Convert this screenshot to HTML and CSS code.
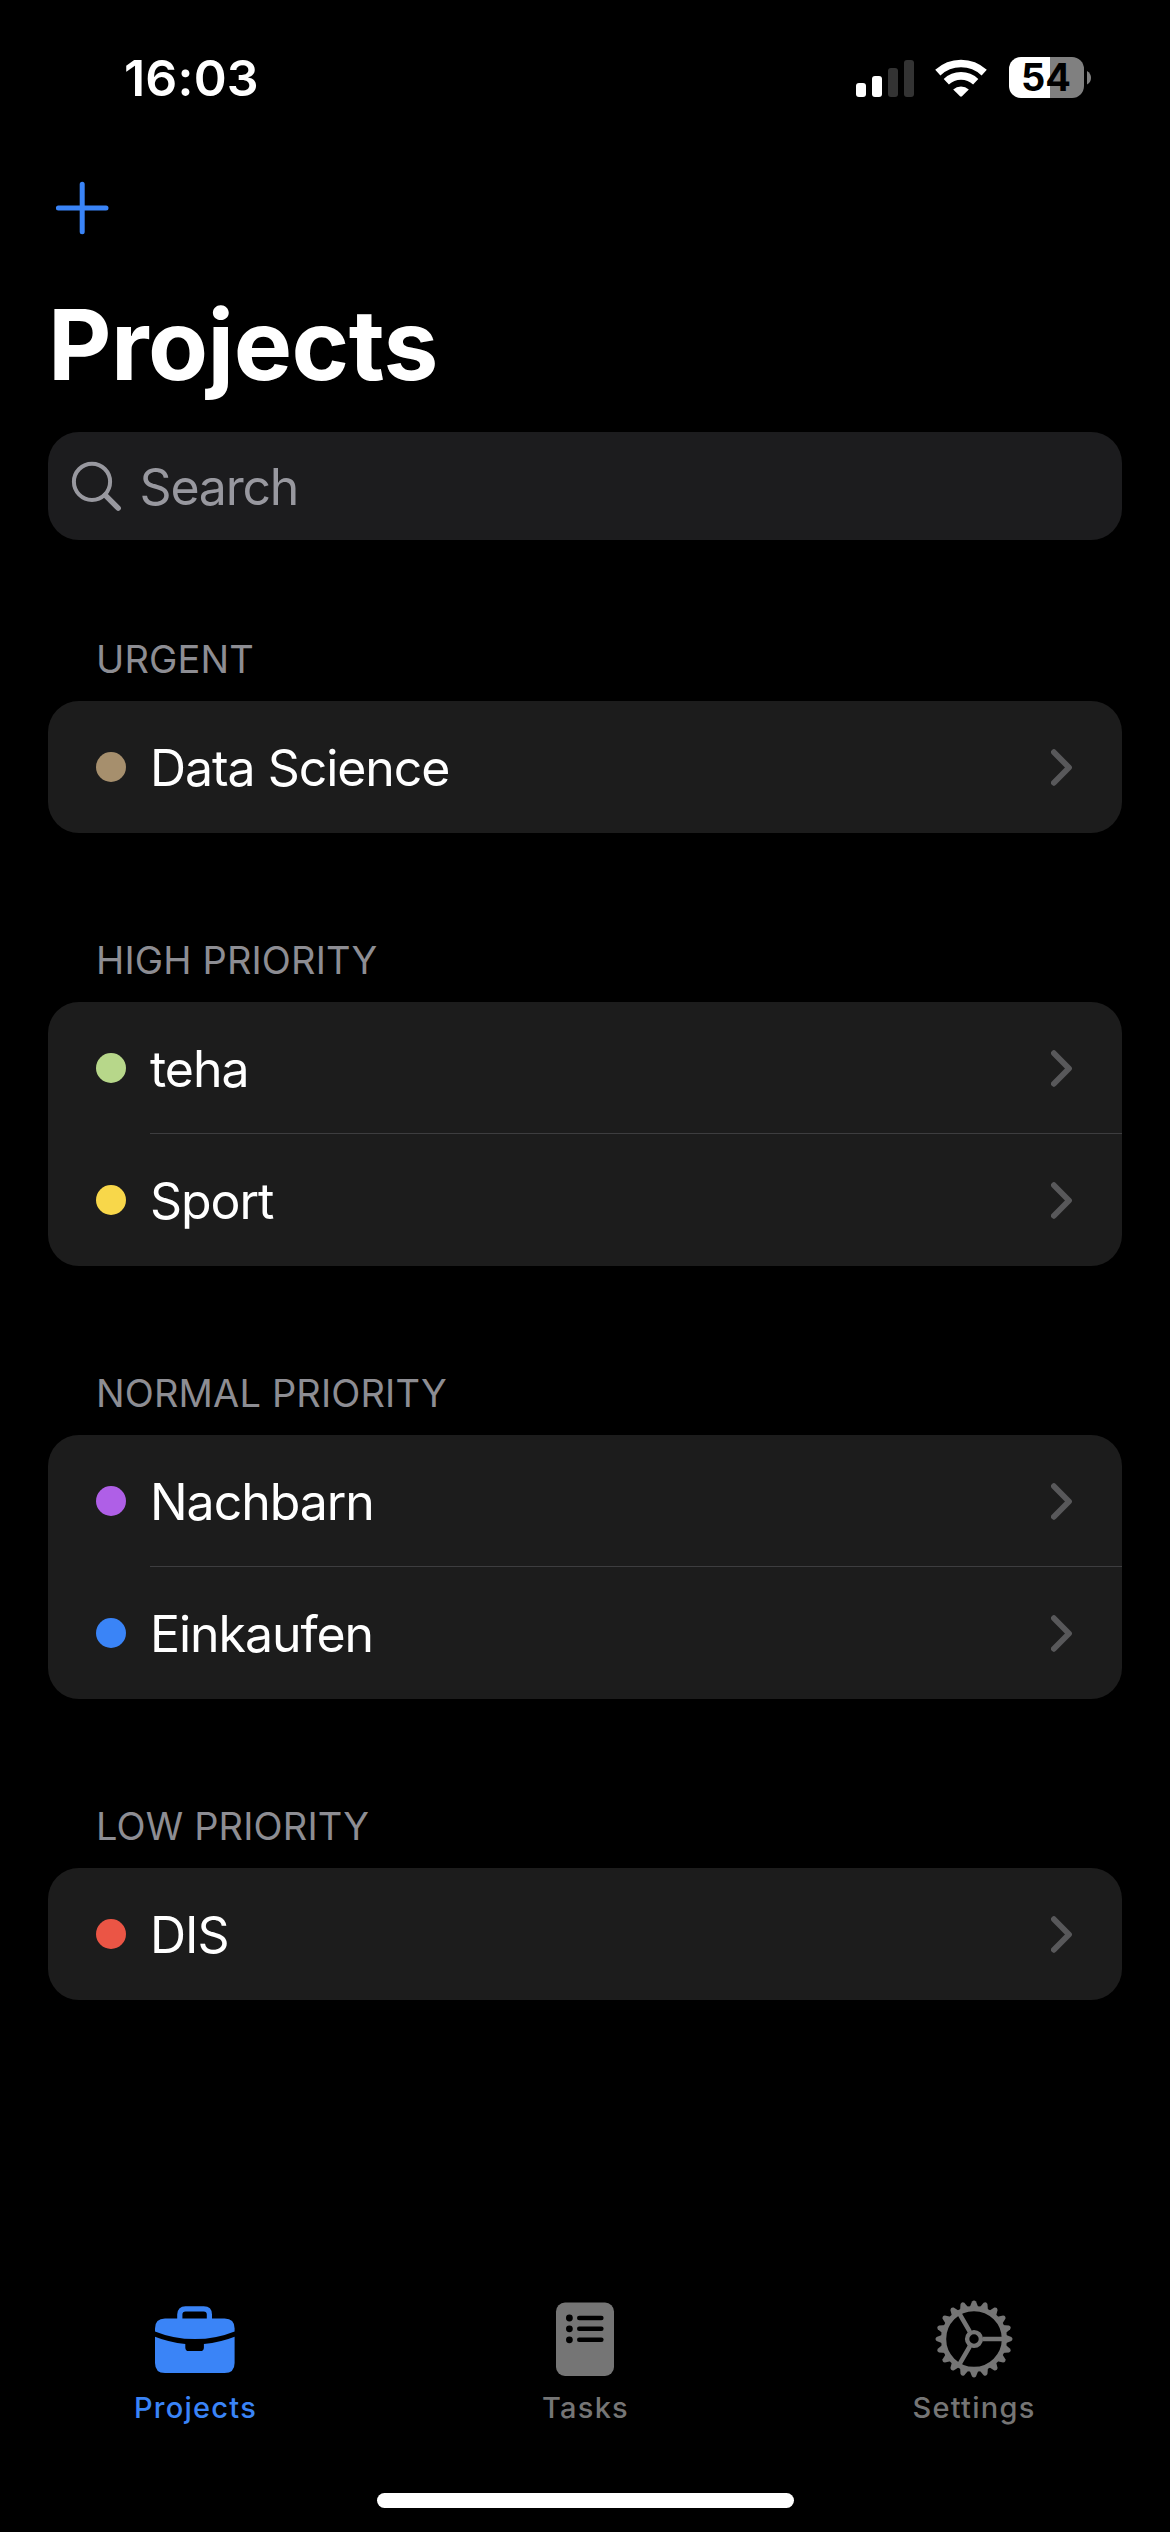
FILE: index.html
```html
<!DOCTYPE html>
<html lang="en">
<head>
<meta charset="utf-8">
<title>Projects</title>
<link rel="stylesheet" href="styles.css">
</head>
<body>
<svg class="defs" aria-hidden="true">
  <defs>
    <symbol id="chevron" viewBox="0 0 21 37"><path d="M2.9 3.2 18 18.5 2.9 33.8" fill="none" stroke="currentColor" stroke-width="5.8" stroke-linecap="round" stroke-linejoin="round"/></symbol>
    <path id="tooth" d="M-4.6-31 -2-37.4Q0-39.6 2-37.4L4.6-31Z"/>
  </defs>
</svg>
<div class="screen">
  <header class="status">
    <div class="time">16:03</div>
    <div class="indicators">
      <svg class="signal" width="58" height="38" viewBox="0 0 58 38">
        <g fill="#fff"><rect x="0" y="24" width="10" height="14" rx="3"/><rect x="16" y="17" width="10" height="21" rx="3"/></g>
        <g fill="#333"><rect x="32" y="9" width="10" height="29" rx="3"/><rect x="48" y="1" width="10" height="37" rx="3"/></g>
      </svg>
      <svg class="wifi" width="52" height="38" viewBox="0 0 52 38">
        <g fill="none" stroke="#fff" stroke-width="7.6">
          <path d="M2.8 13.6A34 34 0 0 1 49.2 13.6"/>
          <path d="M11.3 22.7A21.5 21.5 0 0 1 40.7 22.7"/>
        </g>
        <path d="M18.2 30.4A11.6 11.6 0 0 1 33.8 30.4L27 37.3Q26 38.2 25 37.3Z" fill="#fff"/>
      </svg>
      <div class="battery"><div class="cell">54</div><svg width="4" height="14" viewBox="0 0 4 14"><path d="M0 0Q4 2.4 4 6.8T0 13.6Z" fill="#808080"/></svg></div>
    </div>
  </header>

  <nav class="toolbar">
    <svg width="54" height="54" viewBox="0 0 54 54"><path d="M27.2 3.2V50.8M3.4 27H51" fill="none" stroke="currentColor" stroke-width="5" stroke-linecap="round"/></svg>
  </nav>

  <h1 class="title">Projects</h1>

  <div class="search">
    <svg width="52" height="52" viewBox="0 0 52 52" fill="none" stroke="currentColor"><circle cx="22" cy="21.8" r="18.1" stroke-width="4"/><path d="M35.2 35.2 48.2 48.2" stroke-width="5.4" stroke-linecap="round"/></svg>
    <span>Search</span>
  </div>

  <main class="sections">
    <section>
      <h2>URGENT</h2>
      <ul class="card">
        <li><i class="dot brown"></i><div class="row"><span>Data Science</span><svg class="chevron"><use href="#chevron"/></svg></div></li>
      </ul>
    </section>
    <section>
      <h2>HIGH PRIORITY</h2>
      <ul class="card">
        <li><i class="dot green"></i><div class="row"><span>teha</span><svg class="chevron"><use href="#chevron"/></svg></div></li>
        <li><i class="dot yellow"></i><div class="row"><span>Sport</span><svg class="chevron"><use href="#chevron"/></svg></div></li>
      </ul>
    </section>
    <section>
      <h2>NORMAL PRIORITY</h2>
      <ul class="card">
        <li><i class="dot purple"></i><div class="row"><span>Nachbarn</span><svg class="chevron"><use href="#chevron"/></svg></div></li>
        <li><i class="dot blue"></i><div class="row"><span>Einkaufen</span><svg class="chevron"><use href="#chevron"/></svg></div></li>
      </ul>
    </section>
    <section>
      <h2>LOW PRIORITY</h2>
      <ul class="card">
        <li><i class="dot red"></i><div class="row"><span>DIS</span><svg class="chevron"><use href="#chevron"/></svg></div></li>
      </ul>
    </section>
  </main>

  <footer class="bottom">
    <nav class="tabs">
      <a class="tab active">
        <svg width="80" height="80" viewBox="0 0 80 80">
          <path d="M24.8 22V15.5Q24.8 9.8 30.5 9.8H48.7Q54.4 9.8 54.4 15.5V22" fill="none" stroke="currentColor" stroke-width="5.2"/>
          <path d="M0 32.4V29.6Q0 19.6 10 19.6H69.6Q79.6 19.6 79.6 29.6V32.4Q61 40 39.8 40T0 32.4Z" fill="currentColor"/>
          <path d="M0 37.8Q14 43.4 30.3 45V48.4Q30.3 52 33.9 52H45.3Q48.9 52 48.9 48.4V45Q65.6 43.4 79.6 37.8V64Q79.6 74 69.6 74H10Q0 74 0 64Z" fill="currentColor"/>
        </svg>
        <span>Projects</span>
      </a>
      <a class="tab">
        <svg width="80" height="80" viewBox="0 0 80 80">
          <rect x="11" y="3.6" width="58" height="73.4" rx="9" fill="currentColor"/>
          <g fill="#000"><circle cx="24.4" cy="19" r="3.4"/><circle cx="24.4" cy="29.8" r="3.4"/><circle cx="24.4" cy="40.8" r="3.4"/>
          <rect x="32" y="16.8" width="26.6" height="4.4" rx="2.2"/><rect x="32" y="27.6" width="26.6" height="4.4" rx="2.2"/><rect x="32" y="38.6" width="26.6" height="4.4" rx="2.2"/></g>
        </svg>
        <span>Tasks</span>
      </a>
      <a class="tab settings">
        <svg width="80" height="80" viewBox="-40 -40 80 80">
          <g fill="none" stroke="currentColor">
            <circle r="30.4" stroke-width="5.2"/>
            <circle r="6.9" stroke-width="4.4"/>
            <path d="M8.5 0H29M-4.2 -7.4 -14.5 -25.1M-4.2 7.4 -14.5 25.1" stroke-width="4.6"/>
          </g>
          <g id="teeth" fill="currentColor"></g>
        </svg>
        <span>Settings</span>
      </a>
    </nav>
    <div class="home"></div>
  </footer>
</div>
<script src="gear.js"></script>
</body>
</html>
```
FILE: styles.css
```css
* { box-sizing: border-box; }
body { margin: 0; background: #000; }
h1, h2, ul { margin: 0; padding: 0; font-weight: 400; list-style: none; }
svg { display: block; flex: none; }
.defs { position: absolute; width: 0; height: 0; }

.screen {
  width: 1170px; height: 2532px;
  display: flex; flex-direction: column;
  background: #000; color: #fff;
  font-family: Inter, "Liberation Sans", sans-serif;
  overflow: hidden;
}

.status {
  height: 156px; padding: 0 79px 0 124px;
  display: flex; justify-content: space-between; align-items: flex-start;
}
.time { margin-top: 48px; line-height: 60px; font-size: 50px; font-weight: 600; letter-spacing: .2px; }
.indicators { display: flex; align-items: center; height: 41px; margin-top: 57px; }
.wifi { margin-left: 21px; }
.battery { display: flex; align-items: center; gap: 3px; margin-left: 22px; }
.cell {
  width: 75px; height: 41px; border-radius: 12px;
  padding-left: 12px;
  background: linear-gradient(90deg, #fff 41px, #808080 41px);
  color: #000; font-size: 38px; font-weight: 700; line-height: 41px;
}

.toolbar { height: 104px; padding: 25px 55px; color: #3a84f7; }
.title { height: 172px; padding-left: 48px; line-height: 169px; font-size: 98px; font-weight: 700; letter-spacing: -.5px; }

.search {
  height: 108px; margin: 0 48px; padding-left: 22px;
  display: flex; align-items: center; gap: 17.5px;
  border-radius: 31px; background: #1c1c1e; color: #98989f;
  font-size: 50px; letter-spacing: -1.2px;
}
.search span { padding-top: 1px; }

.sections { display: flex; flex-direction: column; gap: 104px; padding: 96px 48px 0; }
.sections h2 { padding-left: 48px; margin-bottom: 18px; line-height: 47px; font-size: 38px; letter-spacing: .15px; color: #8d8d93; }
.card { border-radius: 31px; background: #1c1c1c; }
.card li { height: 132px; padding-left: 48px; display: flex; align-items: center; gap: 24px; }
.dot { flex: none; width: 30px; height: 30px; border-radius: 50%; }
.brown { background: #a68f6d; }
.green { background: #b7d78a; }
.yellow { background: #f8d74a; }
.purple { background: #af5fe7; }
.blue { background: #3a84f7; }
.red { background: #eb5545; }
.row {
  flex: 1; height: 132px; padding-right: 50px;
  display: flex; align-items: center; justify-content: space-between;
  font-size: 50px; letter-spacing: -1.05px;
}
.row span { padding-top: 1px; }
li:not(:last-child) .row { box-shadow: inset 0 -1px #3d3d3f; }
.chevron { width: 21px; height: 37px; color: #58585a; }

.bottom { margin-top: auto; padding-bottom: 24px; }
.tabs { display: grid; grid-template-columns: repeat(3, 1fr); margin-bottom: 67px; }
.tab { display: flex; flex-direction: column; align-items: center; gap: 11px; color: #757575; font-size: 29px; font-weight: 450; line-height: 36px; letter-spacing: 1.25px; }
.tab span { margin-right: -1px; }
.tab.active { color: #3a84f7; }
.tab.settings { padding-right: 3px; }
.home { width: 417px; height: 15px; margin: 0 auto; border-radius: 8px; background: #fff; }
```
FILE: gear.js
```js
// Twenty teeth, one every 18 degrees around the settings gear.
const teeth = document.getElementById('teeth');
for (let angle = 0; angle < 360; angle += 18) {
  const tooth = document.createElementNS('http://www.w3.org/2000/svg', 'use');
  tooth.setAttribute('href', '#tooth');
  tooth.setAttribute('transform', `rotate(${angle + 90})`);
  teeth.appendChild(tooth);
}
```
